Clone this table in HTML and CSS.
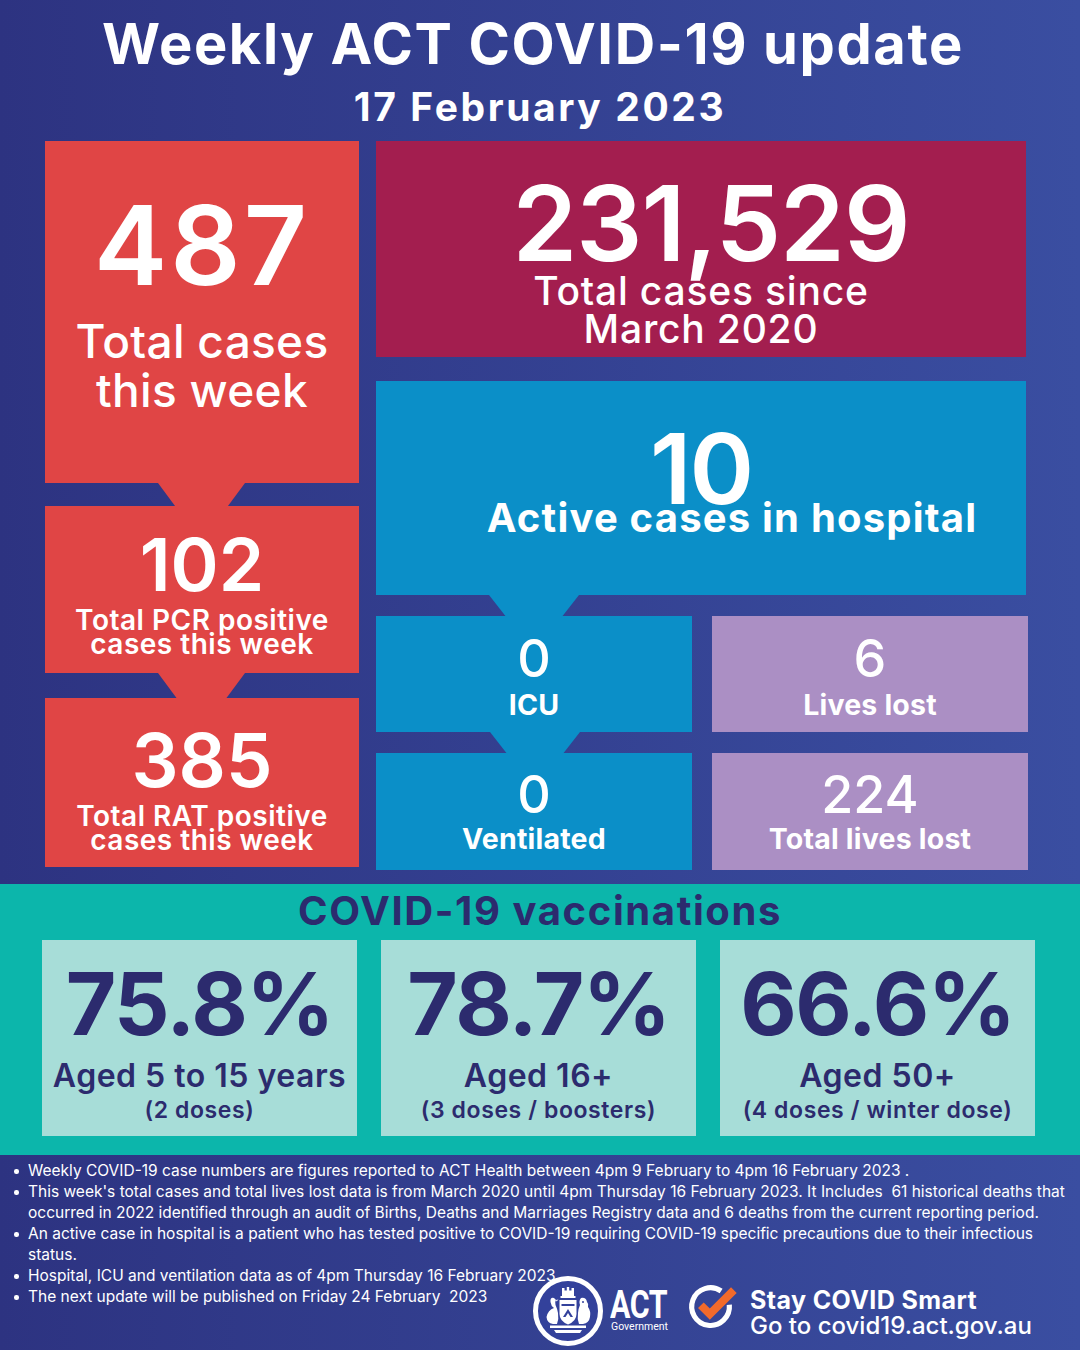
FILE: index.html
```html
<!DOCTYPE html>
<html lang="en">
<head>
<meta charset="utf-8">
<title>Weekly ACT COVID-19 update</title>
<link rel="stylesheet" href="styles.css">
</head>
<body>
<div class="page">
  <header class="header">
    <h1 class="title">Weekly ACT COVID-19 update</h1>
    <h2 class="date">17 February 2023</h2>
  </header>

  <main class="stats">
    <section class="col-left">
      <div class="box red b1 arrow arrow-red">
        <div class="num n487">487</div>
        <div class="lbl l-week">Total cases<br>this week</div>
      </div>
      <div class="box red b2 arrow arrow-red">
        <div class="num n102">102</div>
        <div class="lbl l-pos">Total PCR positive<br>cases this week</div>
      </div>
      <div class="box red b3">
        <div class="num n385">385</div>
        <div class="lbl l-pos">Total RAT positive<br>cases this week</div>
      </div>
    </section>

    <section class="col-right">
      <div class="box maroon total">
        <div class="num n-total">231,529</div>
        <div class="lbl l-since">Total cases since<br>March 2020</div>
      </div>
      <div class="box blue hosp arrow arrow-blue">
        <div class="num n-hosp">10</div>
        <div class="lbl l-hosp">Active cases in hospital</div>
      </div>
      <div class="grid4">
        <div class="box blue small r1 arrow arrow-blue">
          <div class="num n-small">0</div>
          <div class="lbl l-small">ICU</div>
        </div>
        <div class="box lav small r1">
          <div class="num n-small">6</div>
          <div class="lbl l-small">Lives lost</div>
        </div>
        <div class="box blue small r2">
          <div class="num n-small">0</div>
          <div class="lbl l-small">Ventilated</div>
        </div>
        <div class="box lav small r2">
          <div class="num n-small">224</div>
          <div class="lbl l-small">Total lives lost</div>
        </div>
      </div>
    </section>
  </main>

  <section class="vacc">
    <h3 class="vacc-title">COVID-19 vaccinations</h3>
    <div class="vacc-cards">
      <div class="card">
        <div class="pct">75.8%</div>
        <div class="age">Aged 5 to 15 years</div>
        <div class="dose">(2 doses)</div>
      </div>
      <div class="card">
        <div class="pct">78.7%</div>
        <div class="age">Aged 16+</div>
        <div class="dose">(3 doses / boosters)</div>
      </div>
      <div class="card">
        <div class="pct">66.6%</div>
        <div class="age">Aged 50+</div>
        <div class="dose">(4 doses / winter dose)</div>
      </div>
    </div>
  </section>

  <footer class="foot">
    <ul class="notes">
      <li>Weekly COVID-19 case numbers are figures reported to ACT Health between 4pm 9 February to 4pm 16 February 2023 .</li>
      <li>This week's total cases and total lives lost data is from March 2020 until 4pm Thursday 16 February 2023. It Includes&nbsp; 61 historical deaths that<br>occurred in 2022 identified through an audit of Births, Deaths and Marriages Registry data and 6 deaths from the current reporting period.</li>
      <li>An active case in hospital is a patient who has tested positive to COVID-19 requiring COVID-19 specific precautions due to their infectious<br>status.</li>
      <li>Hospital, ICU and ventilation data as of 4pm Thursday 16 February 2023</li>
      <li>The next update will be published on Friday 24 February&nbsp; 2023</li>
    </ul>

    <div class="brand">
      <svg class="seal" viewBox="0 0 72 72" width="72" height="72" aria-hidden="true">
        <circle cx="36" cy="36" r="32.5" fill="#33419b" stroke="#fff" stroke-width="5"/>
        <path d="M30 21 V13 H32.5 V15.5 H34.8 V12 H37.2 V15.5 H39.5 V13 H42 V21 Z" fill="#fff"/>
        <rect x="28.5" y="21" width="15" height="2" fill="#fff"/>
        <path d="M27.5 25 H44.5 V39 Q44.5 46 36 49.5 Q27.5 46 27.5 39 Z" fill="#fff"/>
        <path d="M29.5 29 H42.5 V31 H29.5 Z" fill="#33419b"/>
        <path d="M31 42 L36 34 L41 42 L38.5 42 L36 38 L33.5 42 Z" fill="#33419b"/>
        <path d="M22 23 Q18 22 18.5 27 Q19 31 22 33 Q16 35 14.5 42 Q15 48 21 49 L25 49 Q27 44 26 38 Q25 33 23.5 30 Q22.5 27 24 25 Z" fill="#fff"/>
        <path d="M24 25 L26.5 24.5 L24.5 26.5 Z" fill="#fff"/>
        <path d="M49 23 Q54 22 55 27 Q57 29 56 32 Q59 36 58 42 Q57 48 51 49 L47 49 Q45 44 46 38 Q46.5 33 48 30 Q46.5 26 49 23 Z" fill="#fff"/>
        <circle cx="51" cy="27" r="1" fill="#33419b"/>
        <path d="M18 50.5 H54 V53 H18 Z" fill="#fff"/>
        <path d="M22 55 H50 L48 58 H24 Z" fill="#fff"/>
      </svg>
      <div class="act">
        <span class="act-word">ACT</span>
        <span class="act-gov">Government</span>
      </div>
      <svg class="check" viewBox="0 0 70 70" width="66" height="66" aria-hidden="true">
        <path d="M41.5 15.9 A20 20 0 1 0 50.2 30.6" fill="none" stroke="#fff" stroke-width="5.5"/>
        <path d="M20 31 L29.5 40.5 L55 15" fill="none" stroke="#f26a2b" stroke-width="8.5" stroke-linejoin="miter"/>
      </svg>
      <div class="smart">
        <span class="smart-1">Stay COVID Smart</span>
        <span class="smart-2">Go to covid19.act.gov.au</span>
      </div>
    </div>
  </footer>
</div>
</body>
</html>
```

FILE: styles.css
```css
* { box-sizing: border-box; margin: 0; padding: 0; }

html, body { width: 1080px; height: 1350px; overflow: hidden; }

body {
  background: linear-gradient(90deg, #2d3381 0%, #3a4ea1 100%);
  font-family: Inter, "Open Sans", "Liberation Sans", sans-serif;
  color: #fff;
}

.page {
  width: 1080px;
  height: 1350px;
  display: flex;
  flex-direction: column;
}

/* Header */
.header {
  height: 141px;
  padding-top: 16px;
  text-align: center;
}
.title {
  font-size: 56px;
  line-height: 1;
  font-weight: 700;
  letter-spacing: 1.6px;
  padding-right: 14px;
}
.date {
  margin-top: 15px;
  font-size: 39px;
  line-height: 1;
  font-weight: 700;
  letter-spacing: 2.6px;
}

/* Stats area */
.stats {
  display: flex;
  gap: 17px;
  padding-left: 45px;
  height: 729px;
}

.col-left {
  width: 314px;
  display: flex;
  flex-direction: column;
}
.col-right {
  width: 652px;
  display: flex;
  flex-direction: column;
}

.box {
  position: relative;
  text-align: center;
}
.red { background: #e04545; }
.maroon { background: #a31e4f; }
.blue { background: #0b8fc8; }
.lav { background: #ab8fc4; }

.num { line-height: 1; font-weight: 600; }
.lbl { font-weight: 500; }

/* Arrow notches (overlay between stacked boxes) */
.arrow::after {
  content: "";
  position: absolute;
  top: 100%;
  height: 27px;
  z-index: 1;
}
.arrow-red::after {
  left: 113px;
  width: 87px;
  background: #e04545;
  clip-path: polygon(0 0, 100% 0, 77% 100%, 23% 100%);
}
.arrow-blue::after {
  left: 113px;
  width: 90px;
  background: #0b8fc8;
  clip-path: polygon(0 0, 100% 0, 80% 100%, 20% 100%);
}

/* Left column */
.b1 { height: 342px; padding-top: 49px; }
.b2 { height: 167px; margin-top: 23px; padding-top: 22px; }
.b3 { height: 169px; margin-top: 25px; padding-top: 25px; }

.n487 { font-size: 110px; letter-spacing: 3px; }
.l-week {
  margin-top: 17px;
  font-size: 46px;
  line-height: 49px;
  letter-spacing: 0.3px;
}
.n102 { font-size: 73px; }
.n385 { font-size: 74px; }
.l-pos {
  margin-top: 7px;
  font-size: 28px;
  line-height: 24px;
  font-weight: 600;
  letter-spacing: 0.5px;
}

/* Right column */
.total {
  width: 650px;
  height: 216px;
  padding-top: 30px;
}
.n-total { font-size: 104px; letter-spacing: -1px; padding-left: 20px; }
.l-since {
  margin-top: -3px;
  font-size: 39px;
  line-height: 38px;
  letter-spacing: 0.8px;
}

.hosp {
  width: 650px;
  height: 214px;
  margin-top: 24px;
  padding-top: 39px;
}
.n-hosp { font-size: 98px; letter-spacing: -2px; }
.l-hosp {
  margin-top: -20px;
  padding-left: 62px;
  font-size: 40px;
  line-height: 1;
  font-weight: 700;
  letter-spacing: 1.2px;
}
.hosp.arrow-blue::after { height: 23px; }

.grid4 {
  margin-top: 21px;
  display: grid;
  grid-template-columns: 316px 316px;
  grid-template-rows: 116px 117px;
  column-gap: 20px;
  row-gap: 21px;
}
.small.r1 { padding-top: 17px; }
.small.r2 { padding-top: 16px; }
.small.arrow-blue::after { left: 114px; height: 23px; }
.n-small { font-size: 52px; font-weight: 500; }
.l-small {
  margin-top: 6px;
  font-size: 28.5px;
  line-height: 1;
  font-weight: 700;
  letter-spacing: 0.2px;
}
.r2 .l-small { margin-top: 4px; }

/* Vaccinations */
.vacc {
  margin-top: 14px;
  height: 271px;
  background: #0cb6ab;
  padding-top: 7px;
}
.vacc-title {
  text-align: center;
  font-size: 40px;
  line-height: 1;
  font-weight: 700;
  color: #2c2b6e;
  letter-spacing: 1.6px;
}
.vacc-cards {
  margin-top: 9px;
  padding-left: 42px;
  display: flex;
  gap: 24px;
}
.card {
  width: 315px;
  height: 196px;
  background: #a7ddd8;
  color: #2c2b6e;
  text-align: center;
  padding-top: 20px;
}
.pct {
  font-size: 87px;
  line-height: 1;
  font-weight: 700;
  letter-spacing: -1.5px;
}
.age {
  margin-top: 13px;
  font-size: 32px;
  line-height: 1;
  font-weight: 600;
  letter-spacing: 0.5px;
}
.dose {
  margin-top: 7px;
  font-size: 23px;
  line-height: 1;
  font-weight: 600;
  letter-spacing: 0.6px;
}

/* Footer */
.foot {
  position: relative;
  flex: 1;
  padding-top: 5px;
}
.notes {
  list-style: none;
  padding-left: 28px;
  font-size: 15.5px;
  line-height: 21px;
  font-weight: 400;
  white-space: nowrap;
}
.notes li { position: relative; }
.notes li::before {
  content: "";
  position: absolute;
  left: -14px;
  top: 9px;
  width: 4.5px;
  height: 4.5px;
  border-radius: 50%;
  background: #fff;
}

.brand {
  position: absolute;
  left: 532px;
  top: 120px;
  display: flex;
  align-items: center;
}
.seal { display: block; }
.act {
  display: flex;
  flex-direction: column;
  margin-left: 6px;
  width: 60px;
}
.act-word {
  font-family: Roboto, "Liberation Sans", sans-serif;
  font-size: 38px;
  line-height: 32px;
  font-weight: 700;
  transform: scaleX(0.8);
  transform-origin: left center;
  letter-spacing: -0.5px;
}
.act-gov {
  font-family: Roboto, "Liberation Sans", sans-serif;
  font-size: 10.5px;
  line-height: 12px;
  margin-left: 1px;
}
.check {
  display: block;
  margin-left: 12px;
  margin-top: -4px;
}
.smart {
  display: flex;
  flex-direction: column;
  margin-left: 2px;
  margin-top: 4px;
}
.smart-1 {
  font-size: 25px;
  line-height: 26px;
  font-weight: 700;
  letter-spacing: 0.4px;
}
.smart-2 {
  font-size: 24px;
  line-height: 26px;
  font-weight: 500;
}
```
